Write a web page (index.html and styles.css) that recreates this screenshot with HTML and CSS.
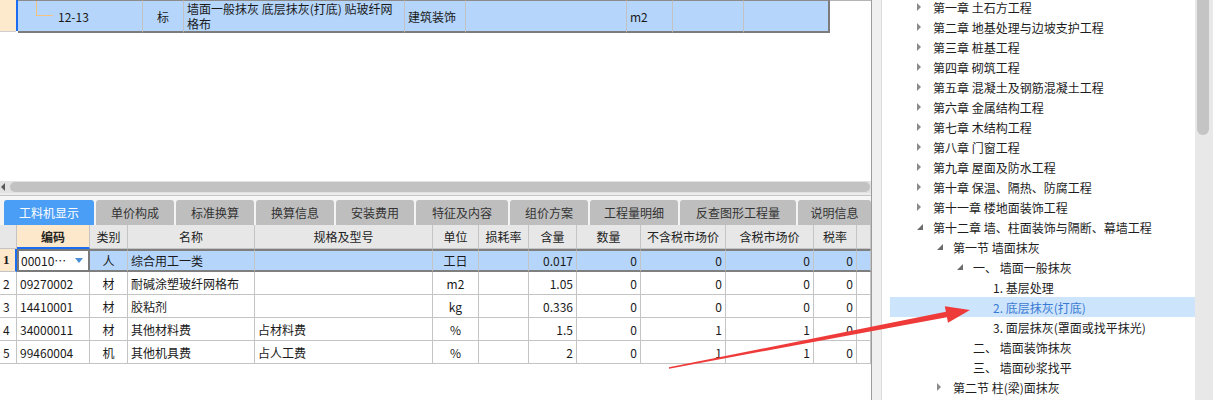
FILE: index.html
```html
<!DOCTYPE html>
<html lang="zh-CN">
<head>
<meta charset="utf-8">
<title>工料机显示</title>
<link rel="stylesheet" href="styles.css">
</head>
<body>
<div class="app">
  <div class="left">
    <div class="top-area">
      <div class="trow">
        <div class="rh"></div>
        <div class="mk"></div>
        <div class="c first"><span class="tl"></span>12-13</div>
        <div class="c ctr">标</div>
        <div class="c wrap"><span class="ln">墙面一般抹灰 底层抹灰(打底) 贴玻纤网</span><span class="ln">格布</span></div>
        <div class="c">建筑装饰</div>
        <div class="c"></div>
        <div class="c">m2</div>
        <div class="c"></div>
        <div class="c sep"></div>
        <div class="blank"></div>
      </div>
    </div>
    <div class="hscroll"><span class="larr"></span><span class="hthumb"></span></div>
    <div class="hsep"></div>
    <div class="tabs">
      <div class="tab active w90">工料机显示</div>
      <div class="tab w78">单价构成</div>
      <div class="tab w78">标准换算</div>
      <div class="tab w78">换算信息</div>
      <div class="tab w78">安装费用</div>
      <div class="tab w92">特征及内容</div>
      <div class="tab w78">组价方案</div>
      <div class="tab w88">工程量明细</div>
      <div class="tab w116">反查图形工程量</div>
      <div class="tab wfill">说明信息</div>
    </div>
    <div class="grid">
      <div class="row hdr">
        <div class="cell rn"></div>
        <div class="cell code">编码</div>
        <div class="cell">类别</div>
        <div class="cell">名称</div>
        <div class="cell">规格及型号</div>
        <div class="cell">单位</div>
        <div class="cell">损耗率</div>
        <div class="cell">含量</div>
        <div class="cell">数量</div>
        <div class="cell">不含税市场价</div>
        <div class="cell">含税市场价</div>
        <div class="cell">税率</div>
        <div class="cell"></div>
      </div>
      <div class="row sel">
        <div class="cell rn cur">1</div>
        <div class="cell edit"><span>00010…</span><span class="dd"></span></div>
        <div class="cell ctr">人</div>
        <div class="cell">综合用工一类</div>
        <div class="cell"></div>
        <div class="cell ctr">工日</div>
        <div class="cell"></div>
        <div class="cell r">0.017</div>
        <div class="cell r">0</div>
        <div class="cell r">0</div>
        <div class="cell r">0</div>
        <div class="cell r">0</div>
        <div class="cell"></div>
      </div>
      <div class="row">
        <div class="cell rn">2</div>
        <div class="cell">09270002</div>
        <div class="cell ctr">材</div>
        <div class="cell">耐碱涂塑玻纤网格布</div>
        <div class="cell"></div>
        <div class="cell ctr">m2</div>
        <div class="cell"></div>
        <div class="cell r">1.05</div>
        <div class="cell r">0</div>
        <div class="cell r">0</div>
        <div class="cell r">0</div>
        <div class="cell r">0</div>
        <div class="cell"></div>
      </div>
      <div class="row">
        <div class="cell rn">3</div>
        <div class="cell">14410001</div>
        <div class="cell ctr">材</div>
        <div class="cell">胶粘剂</div>
        <div class="cell"></div>
        <div class="cell ctr">kg</div>
        <div class="cell"></div>
        <div class="cell r">0.336</div>
        <div class="cell r">0</div>
        <div class="cell r">0</div>
        <div class="cell r">0</div>
        <div class="cell r">0</div>
        <div class="cell"></div>
      </div>
      <div class="row">
        <div class="cell rn">4</div>
        <div class="cell">34000011</div>
        <div class="cell ctr">材</div>
        <div class="cell">其他材料费</div>
        <div class="cell">占材料费</div>
        <div class="cell ctr">%</div>
        <div class="cell"></div>
        <div class="cell r">1.5</div>
        <div class="cell r">0</div>
        <div class="cell r">1</div>
        <div class="cell r">1</div>
        <div class="cell r">0</div>
        <div class="cell"></div>
      </div>
      <div class="row">
        <div class="cell rn">5</div>
        <div class="cell">99460004</div>
        <div class="cell ctr">机</div>
        <div class="cell">其他机具费</div>
        <div class="cell">占人工费</div>
        <div class="cell ctr">%</div>
        <div class="cell"></div>
        <div class="cell r">2</div>
        <div class="cell r">0</div>
        <div class="cell r">1</div>
        <div class="cell r">1</div>
        <div class="cell r">0</div>
        <div class="cell"></div>
      </div>
    </div>
  </div>
  <div class="splitter"></div>
  <div class="right">
    <ul class="tree">
      <li class="l1"><span class="tw col"></span>第一章 土石方工程</li>
      <li class="l1"><span class="tw col"></span>第二章 地基处理与边坡支护工程</li>
      <li class="l1"><span class="tw col"></span>第三章 桩基工程</li>
      <li class="l1"><span class="tw col"></span>第四章 砌筑工程</li>
      <li class="l1"><span class="tw col"></span>第五章 混凝土及钢筋混凝土工程</li>
      <li class="l1"><span class="tw col"></span>第六章 金属结构工程</li>
      <li class="l1"><span class="tw col"></span>第七章 木结构工程</li>
      <li class="l1"><span class="tw col"></span>第八章 门窗工程</li>
      <li class="l1"><span class="tw col"></span>第九章 屋面及防水工程</li>
      <li class="l1"><span class="tw col"></span>第十章 保温、隔热、防腐工程</li>
      <li class="l1"><span class="tw col"></span>第十一章 楼地面装饰工程</li>
      <li class="l1"><span class="tw exp"></span>第十二章 墙、柱面装饰与隔断、幕墙工程</li>
      <li class="l2"><span class="tw exp"></span>第一节 墙面抹灰</li>
      <li class="l3"><span class="tw exp"></span>一、 墙面一般抹灰</li>
      <li class="l4"><span class="tw"></span>1. 基层处理</li>
      <li class="l4 on"><span class="tw"></span>2. 底层抹灰(打底)</li>
      <li class="l4"><span class="tw"></span>3. 面层抹灰(罩面或找平抹光)</li>
      <li class="l3"><span class="tw"></span>二、 墙面装饰抹灰</li>
      <li class="l3"><span class="tw"></span>三、 墙面砂浆找平</li>
      <li class="l2"><span class="tw col"></span>第二节 柱(梁)面抹灰</li>
    </ul>
    <div class="vscroll"><div class="vthumb"></div></div>
  </div>
  <svg class="arrow" width="1213" height="400" viewBox="0 0 1213 400">
    <polygon points="668.9,367.3 945.9,311.8 944.8,306.2 970,310 948.0,322.8 946.9,317.2 669.1,368.7" fill="#ef3a3a"/>
  </svg>
</div>
</body>
</html>
```
FILE: styles.css
```css
* { box-sizing: border-box; margin: 0; padding: 0; }
html, body { width: 1213px; height: 400px; overflow: hidden; background: #fff; }
body {
  font-family: "Noto Sans CJK SC", "Microsoft YaHei", sans-serif;
  font-size: 12px;
  color: #1a1a1a;
}
.app { position: relative; display: flex; width: 1213px; height: 400px; }

/* ---------- left pane ---------- */
.left {
  width: 872px;
  flex: none;
  border-right: 1px solid #9c9c9c;
  display: flex;
  flex-direction: column;
}
.top-area { height: 181px; flex: none; }
.trow {
  display: grid;
  grid-template-columns: 16px 2px 125px 41px 221px 61px 161px 46px 71px 86px 41px;
  height: 33px;
}
.trow .rh { background: #fde9cc; height: 32px; border-bottom: 1px solid #cfcfcf; }
.trow .mk { background: #1b6cf0; height: 31px; }
.trow .c {
  background: #b5d5fb;
  border-top: 1px solid #8c8c8c;
  border-bottom: 2px solid #7c7c7c;
  border-right: 1px solid #c2c2c2;
  padding: 0 3px;
  display: flex;
  align-items: center;
  white-space: nowrap;
  overflow: hidden;
}
.trow .c.ctr { justify-content: center; }
.trow .c.sep { border-right: 2px solid #7c7c7c; }
.trow .c.wrap {
  flex-direction: column;
  align-items: flex-start;
  justify-content: flex-start;
  padding-top: 0;
}
.ln { display: block; height: 15px; line-height: 15px; }
.trow .c.first { padding-left: 18px; }
.tl {
  align-self: flex-start;
  width: 17px;
  height: 15px;
  margin-right: 5px;
  border-left: 1px solid #f3c27e;
  border-bottom: 1px solid #f3c27e;
  flex: none;
}
.trow .blank { background: #fff; border-top: 1px solid #b4b4b4; }

.hscroll {
  height: 12px;
  flex: none;
  background: #e2e2e2;
  display: flex;
  align-items: center;
}
.larr {
  width: 0; height: 0;
  margin-left: 1px;
  border-right: 4px solid #5a5a5a;
  border-top: 4px solid transparent;
  border-bottom: 4px solid transparent;
}
.hthumb {
  flex: 1;
  height: 10px;
  margin: 0 1px 0 5px;
  border-radius: 5px;
  background: #c2c2c2;
}
.hsep {
  height: 7px;
  flex: none;
  background: linear-gradient(#ececec 0 2px, #c6c6c6 2px 3px, #f6f6f6 3px);
}

.tabs {
  height: 25px;
  flex: none;
  display: flex;
  gap: 2px;
  padding-left: 4px;
  background: #f4f4f4;
}
.tab {
  flex: none;
  background: #bebebe;
  border-radius: 3px 3px 0 0;
  color: #333;
  display: flex;
  align-items: center;
  justify-content: center;
  white-space: nowrap;
}
.tab.active { background: #4b9ef5; color: #fff; }
.w78 { width: 78px; }
.w88 { width: 88px; }
.w90 { width: 90px; }
.w92 { width: 92px; }
.w116 { width: 116px; }
.wfill { flex: 1; }

.grid { flex: none; }
.row {
  display: grid;
  grid-template-columns: 17px 73px 38px 127px 178px 46px 50px 48px 64px 85px 88px 43px 14px;
}
.cell {
  height: 23px;
  border-right: 1px solid #c4c4c4;
  border-bottom: 1px solid #c4c4c4;
  padding: 0 3px;
  display: flex;
  align-items: center;
  white-space: nowrap;
  overflow: hidden;
}
.cell.ctr { justify-content: center; }
.cell.r { justify-content: flex-end; }
.cell.rn { padding: 0 0 0 3px; }
.hdr .cell {
  height: 24px;
  background: #e7e7e7;
  justify-content: center;
  color: #222;
}
.hdr .cell.code {
  background: #fde8cb;
  font-weight: 700;
  border-bottom: 2px solid #1b6cf0;
}
.sel .cell {
  background: #b5d5fb;
  border-top: 2px solid #7f7f7f;
  border-bottom: 2px solid #7f7f7f;
}
.sel .cell.rn.cur {
  background: #fde8cb;
  border-top: 0;
  border-bottom: 1px solid #c4c4c4;
  border-right: 2px solid #1b6cf0;
  font-weight: 700;
  font-family: "Liberation Serif", serif;
  font-size: 13px;
}
.sel .cell.edit {
  background: #fff;
  border: 2px solid #7a7a7a;
  justify-content: space-between;
  padding: 0 5px 0 2px;
}
.dd {
  width: 0; height: 0;
  border-top: 5px solid #4a8fd6;
  border-left: 4px solid transparent;
  border-right: 4px solid transparent;
}

/* ---------- splitter & right pane ---------- */
.splitter {
  width: 10px;
  flex: none;
  background: #f0f0f0;
  border-right: 1px solid #dcdcdc;
}
.right { flex: 1; display: flex; overflow: hidden; }
.tree {
  flex: 1;
  list-style: none;
  margin-top: -3px;
}
.tree li {
  height: 20px;
  margin-left: 8px;
  display: flex;
  align-items: center;
  white-space: nowrap;
  color: #1c1c1c;
}
.tree li.l1 { padding-left: 27px; }
.tree li.l2 { padding-left: 47px; }
.tree li.l3 { padding-left: 67px; }
.tree li.l4 { padding-left: 87px; }
.tree li.on { background: #cce5fc; color: #3b7ad4; }
.tw { width: 16px; height: 20px; flex: none; position: relative; }
.tw.col::before {
  content: "";
  position: absolute;
  left: 0; top: 6px;
  border-left: 4px solid #8a8a8a;
  border-top: 4px solid transparent;
  border-bottom: 4px solid transparent;
}
.tw.exp::before {
  content: "";
  position: absolute;
  left: 0; top: 7px;
  width: 0; height: 0;
  border-right: 6px solid #6c6c6c;
  border-top: 6px solid transparent;
}
.vscroll { width: 18px; flex: none; background: #e8e8e8; }
.vthumb {
  margin-left: 2px;
  width: 12px;
  height: 135px;
  border-radius: 0 0 6px 6px;
  background: #c4c4c4;
}

.arrow { position: absolute; left: 0; top: 0; pointer-events: none; }
```
